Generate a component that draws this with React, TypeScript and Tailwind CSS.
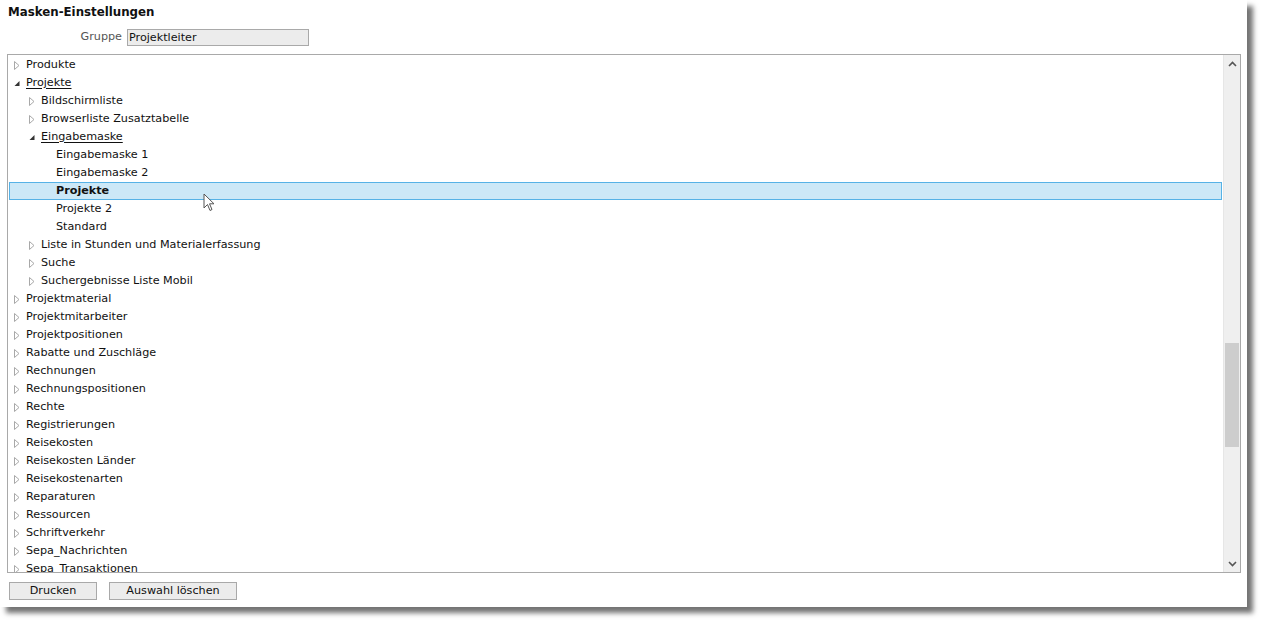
import React from "react";

type Item = { label: string; level: number; state: "collapsed" | "expanded" | "leaf"; selected?: boolean };

const items: Item[] = [
  { label: "Produkte", level: 0, state: "collapsed" },
  { label: "Projekte", level: 0, state: "expanded" },
  { label: "Bildschirmliste", level: 1, state: "collapsed" },
  { label: "Browserliste Zusatztabelle", level: 1, state: "collapsed" },
  { label: "Eingabemaske", level: 1, state: "expanded" },
  { label: "Eingabemaske 1", level: 2, state: "leaf" },
  { label: "Eingabemaske 2", level: 2, state: "leaf" },
  { label: "Projekte", level: 2, state: "leaf", selected: true },
  { label: "Projekte 2", level: 2, state: "leaf" },
  { label: "Standard", level: 2, state: "leaf" },
  { label: "Liste in Stunden und Materialerfassung", level: 1, state: "collapsed" },
  { label: "Suche", level: 1, state: "collapsed" },
  { label: "Suchergebnisse Liste Mobil", level: 1, state: "collapsed" },
  { label: "Projektmaterial", level: 0, state: "collapsed" },
  { label: "Projektmitarbeiter", level: 0, state: "collapsed" },
  { label: "Projektpositionen", level: 0, state: "collapsed" },
  { label: "Rabatte und Zuschläge", level: 0, state: "collapsed" },
  { label: "Rechnungen", level: 0, state: "collapsed" },
  { label: "Rechnungspositionen", level: 0, state: "collapsed" },
  { label: "Rechte", level: 0, state: "collapsed" },
  { label: "Registrierungen", level: 0, state: "collapsed" },
  { label: "Reisekosten", level: 0, state: "collapsed" },
  { label: "Reisekosten Länder", level: 0, state: "collapsed" },
  { label: "Reisekostenarten", level: 0, state: "collapsed" },
  { label: "Reparaturen", level: 0, state: "collapsed" },
  { label: "Ressourcen", level: 0, state: "collapsed" },
  { label: "Schriftverkehr", level: 0, state: "collapsed" },
  { label: "Sepa_Nachrichten", level: 0, state: "collapsed" },
  { label: "Sepa_Transaktionen", level: 0, state: "collapsed" },
];

function Toggle({ state }: { state: Item["state"] }) {
  if (state === "collapsed")
    return (
      <svg width="6" height="9" viewBox="0 0 6 9" className="shrink-0">
        <path d="M0.5 0.5 L5 4.5 L0.5 8.5 Z" fill="#fff" stroke="#a8a8a8" strokeWidth="1" />
      </svg>
    );
  if (state === "expanded")
    return (
      <svg width="6" height="9" viewBox="0 0 6 9" className="shrink-0">
        <path d="M5.5 2 L5.5 7 L0.5 7 Z" fill="#333" />
      </svg>
    );
  return <span className="w-[6px] shrink-0" />;
}

function Row({ item }: { item: Item }) {
  const pad = 6 + item.level * 15;
  return (
    <div
      className={
        "relative flex h-[18px] items-center shrink-0 " +
        (item.selected ? "mx-[1px] bg-[#cce8f7] border border-[#56b2e6]" : "")
      }
      style={{ paddingLeft: item.selected ? pad - 2 : pad }}
    >
      <Toggle state={item.state} />
      <span
        className={
          "ml-[6px] whitespace-nowrap text-[#111] " +
          (item.state === "expanded" ? "underline underline-offset-2 " : "") +
          (item.selected ? "font-bold" : "")
        }
      >
        {item.label}
      </span>
      {item.selected && (
        <svg width="14" height="20" viewBox="0 0 14 20" className="absolute left-[193px] top-[10px]">
          <path
            d="M1 1 L1 15 L4.5 11.5 L7 17.5 L9 16.5 L6.5 10.8 L11 10.8 Z"
            fill="#fff"
            stroke="#555"
            strokeWidth="1"
            strokeLinejoin="round"
          />
        </svg>
      )}
    </div>
  );
}

export default function App() {
  return (
    <div
      className="bg-white w-[1262px] h-[623px] text-[11.2px] text-[#111]"
      style={{ fontFamily: '"DejaVu Sans", Verdana, sans-serif' }}
    >
      <div className="relative w-[1247px] h-[607px] bg-white shadow-[6px_6px_5px_rgba(0,0,0,0.55)] flex flex-col">
        <div className="pl-[8px] pt-[5px] font-bold text-[11.8px] leading-[14px] text-[#111]">Masken-Einstellungen</div>
        <div className="flex items-center mt-[10px] h-[17px]">
          <span className="w-[122px] text-right text-[#555]">Gruppe</span>
          <div className="ml-[5px] w-[182px] h-[17px] bg-[#ececec] border border-[#a9a9a9] flex items-center pl-[1px] leading-none">
            Projektleiter
          </div>
        </div>
        <div className="mt-[8px] ml-[7px] w-[1234px] h-[519px] border border-[#a9a9a9] flex">
          <div className="flex-1 flex flex-col overflow-hidden pt-[1px]">
            {items.map((it, i) => (
              <Row key={i} item={it} />
            ))}
          </div>
          <div className="w-[17px] bg-[#efefef] flex flex-col border-l border-[#e6e6e6]">
            <div className="h-[17px] flex items-center justify-center">
              <svg width="9" height="6" viewBox="0 0 9 6">
                <path d="M1 5 L4.5 1.5 L8 5" fill="none" stroke="#555" strokeWidth="1.6" />
              </svg>
            </div>
            <div className="h-[271px]" />
            <div className="h-[104px] mx-[1px] bg-[#cdcdcd]" />
            <div className="flex-1" />
            <div className="h-[17px] flex items-center justify-center">
              <svg width="9" height="6" viewBox="0 0 9 6">
                <path d="M1 1 L4.5 4.5 L8 1" fill="none" stroke="#555" strokeWidth="1.6" />
              </svg>
            </div>
          </div>
        </div>
        <div className="flex mt-[9px] ml-[9px] gap-[12px]">
          <button className="w-[88px] h-[18px] bg-[#ececec] border border-[#a9a9a9] text-[11.2px] leading-none text-[#111]">
            Drucken
          </button>
          <button className="w-[128px] h-[18px] bg-[#ececec] border border-[#a9a9a9] text-[11.2px] leading-none text-[#111]">
            Auswahl löschen
          </button>
        </div>
      </div>
    </div>
  );
}
